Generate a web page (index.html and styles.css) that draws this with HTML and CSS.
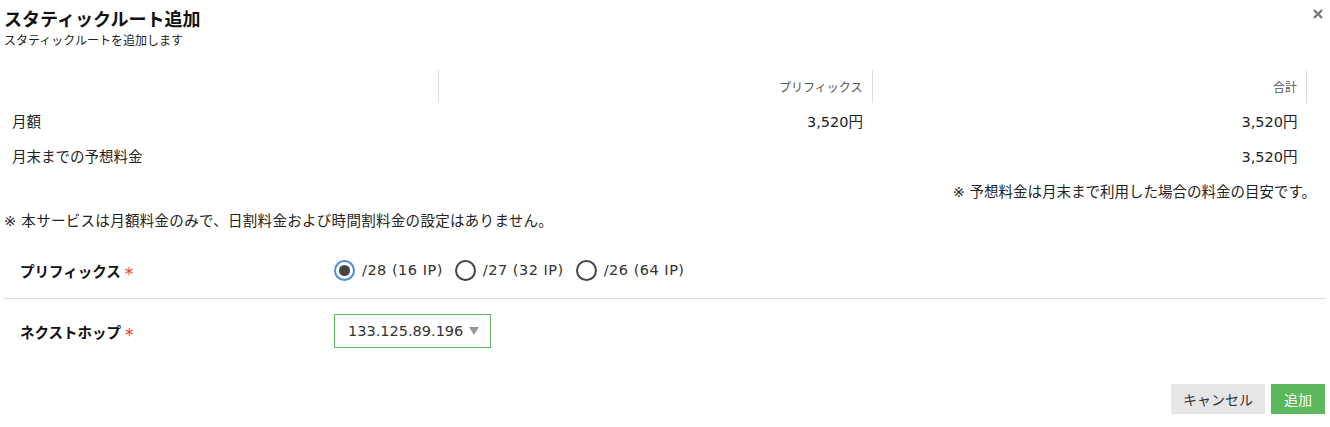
FILE: index.html
```html
<!DOCTYPE html>
<html lang="ja">
<head>
<meta charset="utf-8">
<link rel="stylesheet" href="styles.css">
</head>
<body>
<div class="dialog">
  <div class="head">
    <div class="titles">
      <h1 class="title">スタティックルート追加</h1>
      <p class="subtitle">スタティックルートを追加します</p>
    </div>
    <svg class="close" width="10" height="10" viewBox="0 0 10 10" aria-label="閉じる"><path d="M1 1L9 9M9 1L1 9" stroke="#7a7a7a" stroke-width="2.4" fill="none"/></svg>
  </div>

  <table class="price">
    <thead>
      <tr>
        <th class="c1"></th>
        <th class="c2">プリフィックス</th>
        <th class="c3">合計</th>
      </tr>
    </thead>
    <tbody>
      <tr>
        <td class="c1">月額</td>
        <td class="c2">3,520円</td>
        <td class="c3">3,520円</td>
      </tr>
      <tr>
        <td class="c1">月末までの予想料金</td>
        <td class="c2"></td>
        <td class="c3">3,520円</td>
      </tr>
    </tbody>
  </table>
  <p class="note-right">※ 予想料金は月末まで利用した場合の料金の目安です。</p>
  <p class="note-left">※ 本サービスは月額料金のみで、日割料金および時間割料金の設定はありません。</p>

  <div class="form">
    <div class="row">
      <div class="label">プリフィックス<span class="req">*</span></div>
      <div class="field radios">
        <label class="radio checked"><span class="dot"></span><span class="rtext">/28 (16 IP)</span></label>
        <label class="radio"><span class="dot"></span><span class="rtext">/27 (32 IP)</span></label>
        <label class="radio"><span class="dot"></span><span class="rtext">/26 (64 IP)</span></label>
      </div>
    </div>
    <div class="row">
      <div class="label">ネクストホップ<span class="req">*</span></div>
      <div class="field">
        <div class="select">133.125.89.196<span class="arrow"></span></div>
      </div>
    </div>
  </div>

  <div class="actions">
    <button class="btn cancel">キャンセル</button>
    <button class="btn add">追加</button>
  </div>
</div>
</body>
</html>
```

FILE: styles.css
```css
* { box-sizing: border-box; }
html, body { margin: 0; padding: 0; background: #fff; }
body {
  font-family: "DejaVu Sans", "Noto Sans CJK JP", sans-serif;
  color: #333;
  font-size: 14.5px;
}
.dialog { padding: 0 4px 0 4px; width: 1330px; }
.head { display: flex; justify-content: space-between; align-items: flex-start; }
.title { margin: 0; padding-top: 6px; font-family: "Noto Sans CJK JP", sans-serif; font-size: 18px; line-height: 24px; font-weight: 700; color: #111; }
.subtitle { margin: 0; font-family: "Noto Sans CJK JP", sans-serif; font-size: 12px; line-height: 19px; color: #222; }
.close { display: block; margin-top: 9px; margin-right: 3px; }

.price { width: 1303px; border-collapse: collapse; margin-top: 21px; }
.price th { height: 33px; font-weight: 400; font-size: 12px; font-family: "Noto Sans CJK JP", sans-serif; color: #555; text-align: right; padding: 0 9px; border-right: 1px solid #ddd; }
.price th.c1 { width: 434px; }
.price th.c2 { width: 434px; }
.price td { height: 35px; padding: 0 9px 0 8px; text-align: right; color: #222; }
.price td.c1 { text-align: left; }
.note-right { margin: 8px 10px 0 0; text-align: right; line-height: 22px; color: #222; }
.note-left { margin: 7px 0 0 0; line-height: 22px; color: #222; letter-spacing: 0.3px; }

.row { display: flex; align-items: center; padding-left: 16px; }
.row + .row { border-top: 1px solid #ddd; }
.row:first-child { height: 66px; padding-top: 10px; }
.row:last-child { height: 65px; }
.label { width: 314px; font-family: "Noto Sans CJK JP", sans-serif; font-size: 14.5px; font-weight: 700; color: #111; display: flex; align-items: center; }
.req { color: #e53935; margin-left: 4px; font-family: "DejaVu Sans", sans-serif; font-size: 17px; line-height: 17px; padding-top: 8px; font-weight: 400; }
.field { display: flex; align-items: center; }
.radios { gap: 12px; }
.radio { display: flex; align-items: center; gap: 7px; color: #333; }
.rtext { letter-spacing: 0.5px; }
.dot { width: 21px; height: 21px; border-radius: 50%; border: 2px solid #444; display: inline-flex; align-items: center; justify-content: center; }
.radio.checked .dot { border-color: #4a90d9; }
.radio.checked .dot::after { content: ""; width: 11px; height: 11px; border-radius: 50%; background: #444; }
.select { width: 157px; height: 34px; border: 1px solid #5cb85c; display: flex; align-items: center; padding-left: 13px; color: #333; }
.arrow { width: 0; height: 0; border-left: 5px solid transparent; border-right: 5px solid transparent; border-top: 8px solid #999; margin-left: 6px; }

.actions { display: flex; justify-content: flex-end; gap: 6px; margin-top: 21px; padding-right: 1px; }
.btn { border: none; height: 30px; font-family: "Noto Sans CJK JP", sans-serif; font-size: 14px; padding: 0; }
.cancel { width: 94px; background: #e6e6e6; color: #333; }
.add { width: 54px; background: #5cb85c; color: #fff; }
```
